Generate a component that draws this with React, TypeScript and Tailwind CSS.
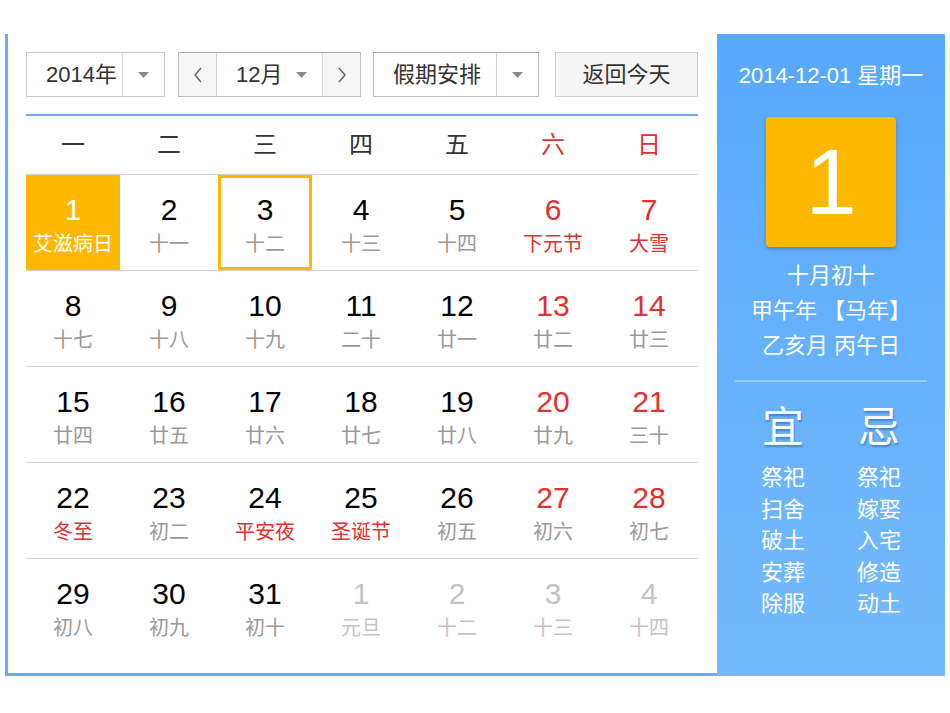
import React from "react";

type Day = {
  n: number;
  l: string;
  numRed?: boolean;
  lunarRed?: boolean;
  other?: boolean;
  today?: boolean;
  picked?: boolean;
};

const rows: Day[][] = [
  [
    { n: 1, l: "艾滋病日", today: true },
    { n: 2, l: "十一" },
    { n: 3, l: "十二", picked: true },
    { n: 4, l: "十三" },
    { n: 5, l: "十四" },
    { n: 6, l: "下元节", numRed: true, lunarRed: true },
    { n: 7, l: "大雪", numRed: true, lunarRed: true },
  ],
  [
    { n: 8, l: "十七" },
    { n: 9, l: "十八" },
    { n: 10, l: "十九" },
    { n: 11, l: "二十" },
    { n: 12, l: "廿一" },
    { n: 13, l: "廿二", numRed: true },
    { n: 14, l: "廿三", numRed: true },
  ],
  [
    { n: 15, l: "廿四" },
    { n: 16, l: "廿五" },
    { n: 17, l: "廿六" },
    { n: 18, l: "廿七" },
    { n: 19, l: "廿八" },
    { n: 20, l: "廿九", numRed: true },
    { n: 21, l: "三十", numRed: true },
  ],
  [
    { n: 22, l: "冬至", lunarRed: true },
    { n: 23, l: "初二" },
    { n: 24, l: "平安夜", lunarRed: true },
    { n: 25, l: "圣诞节", lunarRed: true },
    { n: 26, l: "初五" },
    { n: 27, l: "初六", numRed: true },
    { n: 28, l: "初七", numRed: true },
  ],
  [
    { n: 29, l: "初八" },
    { n: 30, l: "初九" },
    { n: 31, l: "初十" },
    { n: 1, l: "元旦", other: true },
    { n: 2, l: "十二", other: true },
    { n: 3, l: "十三", other: true },
    { n: 4, l: "十四", other: true },
  ],
];

const weekdays = ["一", "二", "三", "四", "五", "六", "日"];
const yi = ["祭祀", "扫舍", "破土", "安葬", "除服"];
const ji = ["祭祀", "嫁娶", "入宅", "修造", "动土"];

function Caret() {
  return (
    <svg width="11" height="6" viewBox="0 0 11 6">
      <path d="M0 0h11L5.5 6z" fill="#8a8a8a" />
    </svg>
  );
}

function Chevron({ dir }: { dir: "l" | "r" }) {
  return (
    <svg width="10" height="16" viewBox="0 0 10 16">
      <path
        d={dir === "l" ? "M8 1L2 8l6 7" : "M2 1l6 7-6 7"}
        fill="none"
        stroke="#666"
        strokeWidth="1.5"
      />
    </svg>
  );
}

function Cell({ d }: { d: Day }) {
  let box = "h-[95px] w-[94px] flex flex-col items-center box-border pt-[20px]";
  let num = "text-black";
  let lunar = "text-[#999]";
  if (d.today) {
    box += " bg-[#ffb800]";
    num = "text-white";
    lunar = "text-white";
  }
  if (d.picked) box = "h-[95px] w-[94px] flex flex-col items-center box-border pt-[17px] border-[3px] border-[#ffb800]";
  if (d.numRed) num = "text-[#e0302f]";
  if (d.lunarRed) lunar = "text-[#e0302f]";
  if (d.other) {
    num = "text-[#c4c4c4]";
    lunar = "text-[#c4c4c4]";
  }
  return (
    <div className="w-[96px]">
      <div className={box}>
        <div className={`text-[30px] leading-[30px] ${num}`}>{d.n}</div>
        <div className={`mt-[8px] text-[20px] leading-[22px] whitespace-nowrap ${lunar}`}>{d.l}</div>
      </div>
    </div>
  );
}

export default function App() {
  return (
    <div className="w-[950px] h-[713px] bg-white font-['Liberation_Sans','Noto_Sans_CJK_SC',sans-serif] overflow-hidden">
      <div className="ml-[5px] pt-[34px] flex">
        {/* calendar body */}
        <div className="w-[712px] h-[642px] box-border border-l-[3px] border-b-[3px] border-[#64acf8] pl-[18px] pt-[18px]">
          <div className="flex items-center text-[22px] text-[#333]">
            <div className="flex h-[45px] w-[139px] border border-[#c8c8c8] bg-white">
              <div className="w-[96px] pl-[19px] leading-[43px] border-r border-[#d6d6d6]">2014年</div>
              <div className="flex-1 flex items-center justify-center">
                <Caret />
              </div>
            </div>
            <div className="ml-[13px] flex h-[45px] w-[183px] border border-[#bdbdbd] border-t-[#aaa]">
              <div className="w-[38px] flex items-center justify-center bg-[#f6f6f6] border-r border-[#d6d6d6]">
                <Chevron dir="l" />
              </div>
              <div className="w-[105px] flex items-center pl-[19px] gap-[14px] bg-white">
                <span className="leading-[43px]">12月</span>
                <Caret />
              </div>
              <div className="flex-1 flex items-center justify-center bg-[#f6f6f6] border-l border-[#d6d6d6]">
                <Chevron dir="r" />
              </div>
            </div>
            <div className="ml-[12px] flex h-[45px] w-[166px] border border-[#bdbdbd] border-t-[#aaa] bg-white">
              <div className="w-[123px] pl-[19px] leading-[43px] border-r border-[#d6d6d6]">假期安排</div>
              <div className="flex-1 flex items-center justify-center">
                <Caret />
              </div>
            </div>
            <div className="ml-[16px] h-[45px] w-[143px] border border-[#d0d0d0] bg-[#f5f5f5] text-center leading-[43px]">
              返回今天
            </div>
          </div>

          <div className="mt-[17px] h-[2px] w-[672px] bg-[#64acf8]" />

          <div className="w-[672px] flex h-[59px] border-b border-[#d2d2d2] items-center">
            {weekdays.map((w, i) => (
              <div
                key={w}
                className={`w-[96px] pr-[2px] text-center text-[24px] ${i >= 5 ? "text-[#e0302f]" : "text-[#333]"}`}
              >
                {w}
              </div>
            ))}
          </div>

          {rows.map((r, ri) => (
            <div
              key={ri}
              className={`w-[672px] flex ${ri < rows.length - 1 ? "border-b border-[#d2d2d2]" : ""}`}
            >
              {r.map((d, di) => (
                <Cell key={di} d={d} />
              ))}
            </div>
          ))}
        </div>

        {/* side panel */}
        <div className="w-[228px] h-[642px] bg-gradient-to-b from-[#57a9fd] to-[#74b9fc] text-white flex flex-col items-center">
          <div className="mt-[28px] text-[22px] leading-[28px] whitespace-nowrap">2014-12-01 星期一</div>
          <div className="mt-[27px] w-[130px] h-[130px] rounded-[4px] bg-[#ffb800] shadow-[0_2px_4px_rgba(0,0,0,0.25)] flex items-center justify-center">
            <span className="text-[92px] leading-none">1</span>
          </div>
          <div className="mt-[11px] text-[22px] leading-[35px] text-center">
            <div>十月初十</div>
            <div className="whitespace-nowrap">甲午年 【马年】</div>
            <div className="whitespace-nowrap">乙亥月 丙午日</div>
          </div>
          <div className="mt-[17px] h-[2px] w-[192px] bg-white/35" />
          <div className="mt-[22px] grid grid-cols-2 w-[192px]">
            <div className="flex flex-col items-center">
              <div className="text-[42px] leading-[48px] [text-shadow:1px_2px_2px_rgba(30,60,120,0.4)]">宜</div>
              <div className="mt-[10px] text-[22px] leading-[31.5px] text-center">
                {yi.map((t, i) => (
                  <div key={i}>{t}</div>
                ))}
              </div>
            </div>
            <div className="flex flex-col items-center">
              <div className="text-[42px] leading-[48px] [text-shadow:1px_2px_2px_rgba(30,60,120,0.4)]">忌</div>
              <div className="mt-[10px] text-[22px] leading-[31.5px] text-center">
                {ji.map((t, i) => (
                  <div key={i}>{t}</div>
                ))}
              </div>
            </div>
          </div>
        </div>
      </div>
    </div>
  );
}
